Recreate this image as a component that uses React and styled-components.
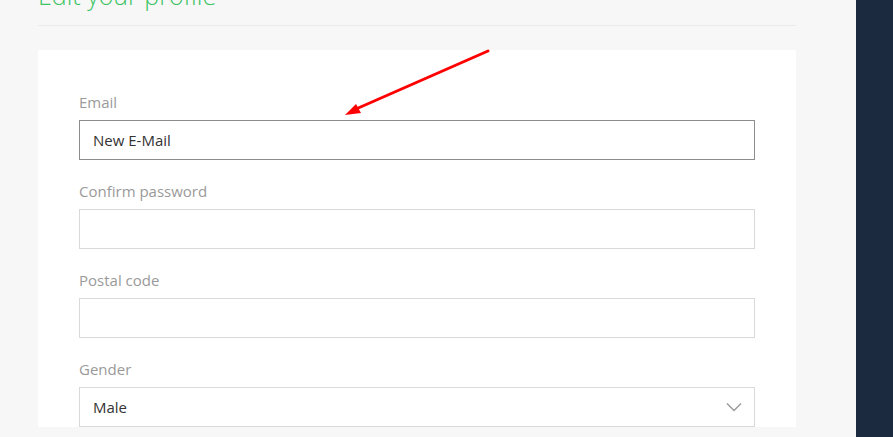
import styled, { createGlobalStyle } from "styled-components";

const GlobalStyle = createGlobalStyle`
  body {
    margin: 0;
    background: #f7f7f7;
    font-family: "Open Sans", "Liberation Sans", sans-serif;
  }
`;

const Page = styled.div`
  display: flex;
  height: 437px;
  overflow: hidden;
`;

const Main = styled.div`
  flex: 1;
  padding: 0 60px 0 38px;
  position: relative;
`;

const Sidebar = styled.div`
  width: 37px;
  background-color: #1c2a3f;
`;

const Title = styled.h1`
  margin: -20px 0 0;
  font-size: 25px;
  font-weight: 300;
  line-height: 30px;
  color: #3cc464;
`;

const Divider = styled.div`
  height: 1px;
  margin-top: 15px;
  background-color: #ebebeb;
`;

const Card = styled.div`
  margin-top: 24px;
  background: #fff;
  padding: 42px 41px 0;
  display: flex;
  flex-direction: column;
  gap: 21px;
`;

const Field = styled.div`
  display: flex;
  flex-direction: column;
`;

const Label = styled.label`
  font-size: 15px;
  line-height: 20px;
  color: #9a9a9a;
  margin-bottom: 8px;
`;

const Box = styled.div`
  height: 38px;
  border: 1px solid ${(p) => (p.$active ? "#8c8c8c" : "#d9d9d9")};
  display: flex;
  align-items: center;
  justify-content: space-between;
  padding: 0 12px 0 13px;
  font-size: 15px;
  color: #333;
`;

const Arrow = styled.svg`
  position: absolute;
  left: 0;
  top: 0;
  pointer-events: none;
`;

const fields = [
  { label: "Email", value: "New E-Mail", active: true },
  { label: "Confirm password", value: "" },
  { label: "Postal code", value: "" },
  { label: "Gender", value: "Male", select: true },
];

const App = () => {
  return (
    <Page>
      <GlobalStyle />
      <Main>
        <Title>Edit your profile</Title>
        <Divider />
        <Card>
          {fields.map((f) => (
            <Field key={f.label}>
              <Label>{f.label}</Label>
              <Box $active={f.active}>
                <span>{f.value}</span>
                {f.select && (
                  <svg width="16" height="10" viewBox="0 0 16 10">
                    <path d="M1 1.5 L8 8.5 L15 1.5" fill="none" stroke="#999" strokeWidth="1.4" />
                  </svg>
                )}
              </Box>
            </Field>
          ))}
        </Card>
        <Arrow width="856" height="437">
          <line x1="488" y1="51" x2="356" y2="109" stroke="#f00" strokeWidth="3" strokeLinecap="round" />
          <polygon points="345,115 356,104 361,113" fill="#f00" />
        </Arrow>
      </Main>
      <Sidebar />
    </Page>
  );
};

export default App;
